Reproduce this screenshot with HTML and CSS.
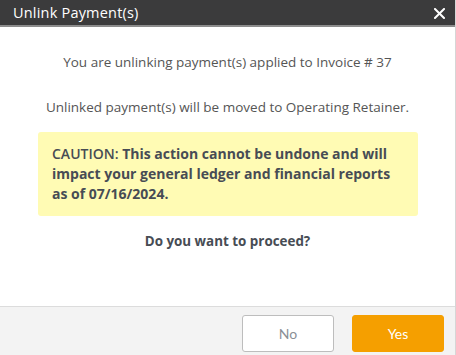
FILE: index.html
```html
<!DOCTYPE html>
<html lang="en">
<head>
    <meta charset="UTF-8">
    <title>Unlink Payment(s)</title>
    <link rel="stylesheet" href="styles.css">
</head>
<body>
    <div class="dialog">
        <div class="header">
            <span class="title">Unlink Payment(s)</span>
            <svg class="close" width="11" height="11" viewBox="0 0 11 11">
                <path d="M1 1 L10 10 M10 1 L1 10" stroke="#fff" stroke-width="2" stroke-linecap="square"/>
            </svg>
        </div>

        <div class="content">
            <p class="line">You are unlinking payment(s) applied to Invoice # 37</p>
            <p class="line">Unlinked payment(s) will be moved to Operating Retainer.</p>
            <div class="caution">
                <span class="label">CAUTION:</span> <b>This action cannot be undone and will impact your general ledger and financial reports as of 07/16/2024.</b>
            </div>
            <p class="proceed">Do you want to proceed?</p>
        </div>

        <div class="footer">
            <button class="btn btn-no">No</button>
            <button class="btn btn-yes">Yes</button>
        </div>
    </div>
</body>
</html>
```

FILE: styles.css
```css
body {
    margin: 0;
    font-family: "Open Sans", "Noto Sans", Arial, sans-serif;
    background: #fff;
}

.dialog {
    width: 455px;
    height: 355px;
    border-right: 1px solid #d6d6d6;
    display: flex;
    flex-direction: column;
}

.header {
    height: 25px;
    background: #3b3b3c;
    border-bottom: 2px solid #8c8c8c;
    display: flex;
    align-items: center;
    justify-content: space-between;
    padding: 0 10px 0 13px;
    color: #fff;
}

.title {
    font-size: 14.5px;
    letter-spacing: 0.2px;
}

.close {
    display: block;
    margin-top: 1px;
}

.content {
    flex: 1;
    text-align: center;
    color: #555;
    font-size: 13.5px;
}

.line {
    margin: 0;
    line-height: 18px;
}

.line:first-child {
    margin-top: 26px;
}

.line + .line {
    margin-top: 27px;
}

.caution {
    margin: 16px 37px 0 38px;
    padding: 12px 14px 12px;
    background: #fffbb4;
    border-radius: 3px;
    text-align: left;
    font-size: 14px;
    line-height: 20px;
    color: #474c54;
}

.caution .label {
    font-weight: 600;
}

.caution b {
    font-weight: 700;
}

.proceed {
    margin: 16px 0 0;
    font-weight: 700;
    color: #474c54;
    font-size: 13.4px;
}

.footer {
    height: 45px;
    border-top: 1px solid #dcdcdc;
    background: #f3f3f3;
    display: flex;
    justify-content: flex-end;
    align-items: flex-end;
    gap: 18px;
    padding: 0 11px 3px 0;
}

.btn {
    width: 92px;
    height: 37px;
    border-radius: 3px;
    font-family: Lato, "Open Sans", sans-serif;
    font-size: 14px;
}

.btn-no {
    background: #fff;
    border: 1px solid #bdbdbd;
    color: #8a8f96;
}

.btn-yes {
    background: #f59f00;
    border: 1px solid #f59f00;
    color: #fff;
}
```
